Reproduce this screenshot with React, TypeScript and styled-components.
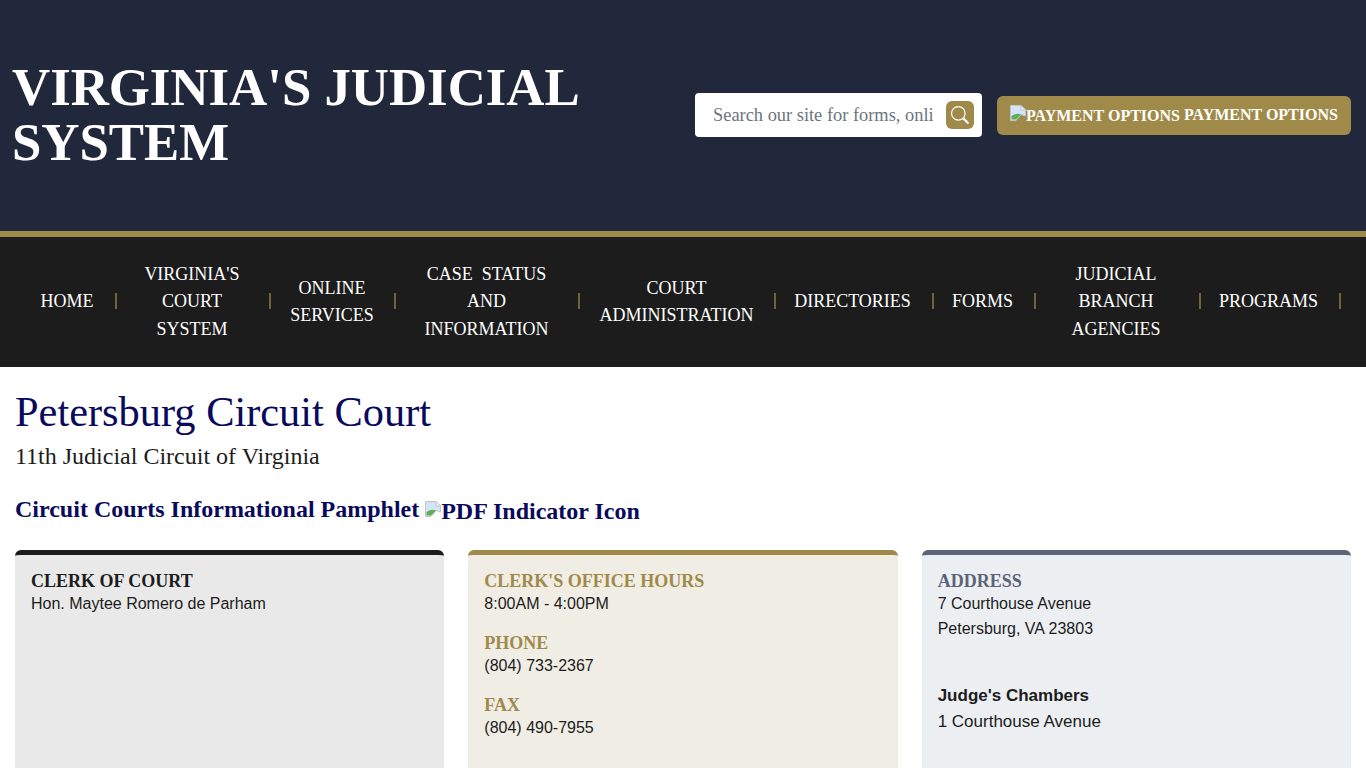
import React from "react";
import styled, { createGlobalStyle } from "styled-components";

const Global = createGlobalStyle`
  html, body { margin: 0; padding: 0; height: 100%; overflow: hidden; background: #fff; }
  * { box-sizing: border-box; }
`;
const serif = `"Liberation Serif", "Times New Roman", serif`;
const sans = `"Liberation Sans", Arial, sans-serif`;

const Header = styled.header`
  height: 237px;
  background: #21283b;
  border-bottom: 6px solid #a08a4a;
  display: flex;
  align-items: center;
  justify-content: space-between;
  padding: 0 15px 1px 12px;
`;
const Title = styled.h1`
  margin: 0;
  width: 640px;
  font: bold 52.8px/55px ${serif};
  color: #fff;
`;
const Tools = styled.div`
  display: flex;
  align-items: center;
  gap: 15px;
`;
const Search = styled.div`
  width: 287px;
  height: 44px;
  background: #fff;
  border-radius: 4px;
  display: flex;
  align-items: center;
  padding: 0 8px 0 18px;
  gap: 13px;
`;
const SearchInput = styled.input`
  flex: 1;
  min-width: 0;
  border: 0;
  outline: 0;
  padding: 0;
  font: 18.4px ${serif};
  color: #333;
  &::placeholder { color: #6c757d; opacity: 1; }
`;
const SearchButton = styled.button`
  width: 28px;
  height: 28px;
  border: 0;
  padding: 0;
  border-radius: 6px;
  background: #a08a4a;
  display: flex;
  align-items: center;
  justify-content: center;
`;
const PayButton = styled.a`
  height: 39px;
  width: 354px;
  background: #a08a4a;
  border-radius: 6px;
  display: flex;
  align-items: center;
  padding: 0 0 0 13px;
  font: bold 16px ${serif};
  color: #fff;
  white-space: pre;
`;
const BrokenBox = styled.svg`
  flex: none;
  width: 16px;
  height: 16px;
  vertical-align: top;
`;
const PayIcon = styled(BrokenBox)`
  margin-top: -5px;
`;
const PayAlt = styled.span`
  display: inline-block;
  position: relative;
  top: 1px;
`;
const Nav = styled.nav`
  height: 130px;
  background: #1c1c1c;
  display: flex;
  align-items: center;
  padding-left: 20px;
`;
const NavItem = styled.a<{ $w: number; $pr?: number }>`
  width: ${(p) => p.$w}px;
  flex: none;
  padding-right: ${(p) => p.$pr ?? 2}px;
  text-align: center;
  font: 18px/27.5px ${serif};
  color: #fff;
`;
const NavSep = styled.span`
  flex: none;
  width: 2px;
  margin: 0 0 2px -1px;
  height: 16px;
  background: #6f6339;
`;
const Main = styled.main`
  padding: 21px 15px 0;
`;
const PageTitle = styled.h2`
  margin: 0;
  font: 42.4px/48px ${serif};
  color: #0a0a5c;
`;
const SubTitle = styled.p`
  margin: 0;
  font: 24px/28px ${serif};
  color: #1c1c1c;
  padding-top: 6px;
`;
const DocLink = styled.a`
  display: block;
  margin-top: 22px;
  font: bold 24px/34px ${serif};
  color: #0a0a5c;
  white-space: pre;
`;
const DocIcon = styled(BrokenBox)`
  vertical-align: baseline;
`;
const DocAlt = styled.span`
  position: relative;
  top: 2px;
`;
const Cards = styled.div`
  margin-top: 24px;
  display: grid;
  grid-template-columns: repeat(3, 1fr);
  column-gap: 24px;
  width: 1336px;
`;
const Card = styled.section<{ $edge: string; $bg: string; $head: string }>`
  height: 400px;
  background: ${(p) => p.$bg};
  border-top: 5px solid ${(p) => p.$edge};
  border-radius: 6px 6px 0 0;
  padding: 16px 16px 0;
  font: 16px/25px ${sans};
  color: #1c1c1c;
  h3 {
    margin: 0;
    font: bold 18px/20px ${serif};
    color: ${(p) => p.$head};
  }
`;
const Group = styled.div`
  margin-bottom: 17px;
`;
const Line = styled.div`
  line-height: 25px;
`;
const Chambers = styled.div`
  margin-top: 42px;
  font-size: 17px;
  line-height: 26px;
`;
const Strong = styled.div`
  font-weight: bold;
`;

const Broken = ({ as: C = BrokenBox }: { as?: any }) => (
  <C viewBox="0 0 16 16">
    <path d="M.5.5H11L15.5 5v6L11 9.5l-5 6H.5z" fill="#d4e4f8" stroke="#c4c4c4" />
    <path d="M11 .5V5h4.5z" fill="#f6f6f6" stroke="#c4c4c4" />
    <path d="M1.5 11C5 8.5 9 8 11 9.5L6 14.5H1.5z" fill="#5fae57" />
  </C>
);

export default function App() {
  return (
    <>
      <Global />
      <Header>
        <Title>VIRGINIA'S JUDICIAL SYSTEM</Title>
        <Tools>
          <Search>
            <SearchInput placeholder="Search our site for forms, online services, and more" />
            <SearchButton aria-label="Search">
              <svg width="18" height="18" viewBox="0 0 16 16" fill="#fff">
                <path d="M11.742 10.344a6.5 6.5 0 1 0-1.397 1.398l3.85 3.85a1 1 0 0 0 1.415-1.414zM12 6.5a5.5 5.5 0 1 1-11 0 5.5 5.5 0 0 1 11 0" />
              </svg>
            </SearchButton>
          </Search>
          <PayButton>
            <Broken as={PayIcon} />
            <PayAlt>PAYMENT OPTIONS</PayAlt> PAYMENT OPTIONS
          </PayButton>
        </Tools>
      </Header>
      <Nav>
        <NavItem $w={96}>HOME</NavItem>
        <NavSep />
        <NavItem $w={153} $pr={3}>VIRGINIA'S<br />COURT<br />SYSTEM</NavItem>
        <NavSep />
        <NavItem $w={124}>ONLINE<br />SERVICES</NavItem>
        <NavSep />
        <NavItem $w={183}>CASE&nbsp; STATUS<br />AND<br />INFORMATION</NavItem>
        <NavSep />
        <NavItem $w={195}>COURT<br />ADMINISTRATION</NavItem>
        <NavSep />
        <NavItem $w={157} $pr={4}>DIRECTORIES</NavItem>
        <NavSep />
        <NavItem $w={101} $pr={4}>FORMS</NavItem>
        <NavSep />
        <NavItem $w={164} $pr={4}>JUDICIAL<br />BRANCH<br />AGENCIES</NavItem>
        <NavSep />
        <NavItem $w={139} $pr={4}>PROGRAMS</NavItem>
        <NavSep />
      </Nav>
      <Main>
        <PageTitle>Petersburg Circuit Court</PageTitle>
        <SubTitle>11th Judicial Circuit of Virginia</SubTitle>
        <DocLink>
          Circuit Courts Informational Pamphlet <Broken as={DocIcon} /><DocAlt>PDF Indicator Icon</DocAlt>
        </DocLink>
        <Cards>
          <Card $edge="#1c1c1c" $bg="#e9e9e9" $head="#1c1c1c">
            <h3>CLERK OF COURT</h3>
            <Line>Hon. Maytee Romero de Parham</Line>
          </Card>
          <Card $edge="#a08a4a" $bg="#f0ede4" $head="#a08a4a">
            <Group>
              <h3>CLERK'S OFFICE HOURS</h3>
              <Line>8:00AM - 4:00PM</Line>
            </Group>
            <Group>
              <h3>PHONE</h3>
              <Line>(804) 733-2367</Line>
            </Group>
            <Group>
              <h3>FAX</h3>
              <Line>(804) 490-7955</Line>
            </Group>
          </Card>
          <Card $edge="#5d6378" $bg="#eceff2" $head="#5d6378">
            <h3>ADDRESS</h3>
            <Line>7 Courthouse Avenue</Line>
            <Line>Petersburg, VA 23803</Line>
            <Chambers>
              <Strong>Judge's Chambers</Strong>
              1 Courthouse Avenue
            </Chambers>
          </Card>
        </Cards>
      </Main>
    </>
  );
}
